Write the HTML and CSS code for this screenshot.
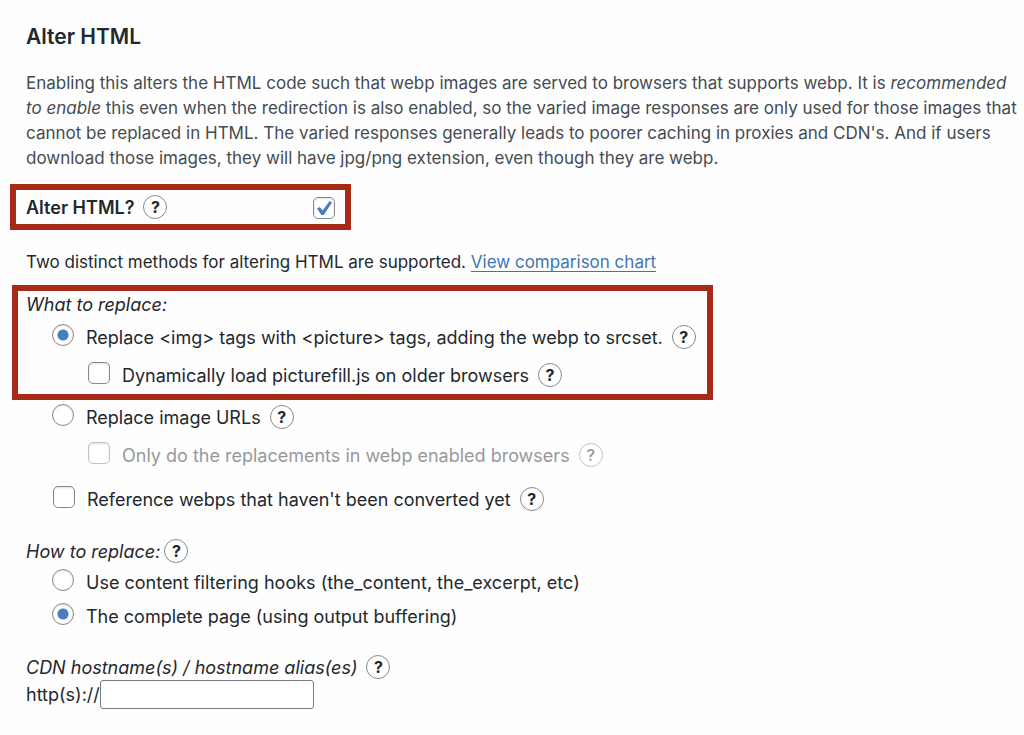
FILE: index.html
```html
<!DOCTYPE html>
<html lang="en">

<head>
    <meta charset="UTF-8">
    <meta name="viewport" content="width=device-width, initial-scale=1.0">
    <title>Alter HTML</title>
    <link rel="stylesheet" href="styles.css">
</head>

<body>
    <form class="settings">
        <h2>Alter HTML</h2>
        <p class="intro">
            Enabling this alters the HTML code such that webp images are served to browsers that supports webp. It is
            <i>recommended to enable</i> this even when the redirection is also enabled, so the varied image responses
            are only used for those images that cannot be replaced in HTML. The varied responses generally leads to
            poorer caching in proxies and CDN's. And if users download those images, they will have jpg/png extension,
            even though they are webp.
        </p>

        <div class="highlight highlight-toggle">
            <label class="toggle-label" for="alter-html">Alter HTML?</label>
            <button type="button" class="help" aria-label="Help: Alter HTML">?</button>
            <input type="checkbox" id="alter-html" checked>
        </div>

        <p class="methods">Two distinct methods for altering HTML are supported. <a href="#">View comparison chart</a></p>

        <div class="highlight highlight-replace">
            <div class="group-title">What to replace:</div>
            <div class="option">
                <input type="radio" id="replace-picture" name="what" checked>
                <label for="replace-picture">Replace &lt;img&gt; tags with &lt;picture&gt; tags, adding the webp to srcset.</label>
                <button type="button" class="help" aria-label="Help: picture tags">?</button>
            </div>
            <div class="option nested">
                <input type="checkbox" id="picturefill">
                <label for="picturefill">Dynamically load picturefill.js on older browsers</label>
                <button type="button" class="help" aria-label="Help: picturefill">?</button>
            </div>
        </div>

        <div class="option">
            <input type="radio" id="replace-urls" name="what">
            <label for="replace-urls">Replace image URLs</label>
            <button type="button" class="help" aria-label="Help: image URLs">?</button>
        </div>
        <div class="option nested disabled">
            <input type="checkbox" id="only-webp" disabled>
            <label for="only-webp">Only do the replacements in webp enabled browsers</label>
            <button type="button" class="help" aria-label="Help: webp enabled browsers" disabled>?</button>
        </div>
        <div class="option reference">
            <input type="checkbox" id="reference-webps">
            <label for="reference-webps">Reference webps that haven't been converted yet</label>
            <button type="button" class="help" aria-label="Help: reference webps">?</button>
        </div>

        <div class="group-title how">
            <span>How to replace:</span>
            <button type="button" class="help" aria-label="Help: how to replace">?</button>
        </div>
        <div class="option compact">
            <input type="radio" id="use-hooks" name="how">
            <label for="use-hooks">Use content filtering hooks (the_content, the_excerpt, etc)</label>
        </div>
        <div class="option compact">
            <input type="radio" id="complete-page" name="how" checked>
            <label for="complete-page">The complete page (using output buffering)</label>
        </div>

        <div class="group-title cdn">
            <label for="cdn">CDN hostname(s) / hostname alias(es)</label>
            <button type="button" class="help" aria-label="Help: CDN hostnames">?</button>
        </div>
        <div class="host">
            <label for="cdn">http(s)://</label>
            <input type="text" id="cdn">
        </div>
    </form>
</body>

</html>
```
FILE: styles.css
```css
* {
    box-sizing: border-box;
}

body {
    margin: 0;
    background-color: #fefefe;
    color: #23282d;
    font-family: Inter, "Liberation Sans", sans-serif;
    font-size: 17px;
    line-height: 25px;
}

.settings {
    padding: 22px 4px 20px 10px;
}

h2 {
    margin: 0 16px 19px;
    font-size: 21px;
    line-height: 30px;
    font-weight: 600;
}

p {
    margin: 0 0 0 16px;
}

.intro {
    color: #444b51;
}

a {
    color: #3f75b0;
    text-underline-offset: 3px;
}

.highlight {
    border: 6px solid #a62b17;
}

.highlight-toggle {
    display: flex;
    align-items: center;
    max-width: 341px;
    height: 46px;
    margin-top: 13px;
    padding: 0 10px;
}

.highlight-toggle input {
    margin: 2px 0 0 auto;
}

.toggle-label {
    font-size: 18px;
    font-weight: 600;
}

.methods {
    margin-top: 20px;
    margin-bottom: 10px;
}

.highlight-replace {
    max-width: 701px;
    margin: 0 0 -2px 2px;
}

.highlight-replace .group-title {
    height: 27px;
    margin-left: 8px;
}

.highlight-replace .option {
    margin-left: 34px;
}

.highlight-replace .nested {
    margin-left: 70px;
}

.group-title {
    display: flex;
    align-items: center;
    height: 28px;
    margin-left: 16px;
    font-size: 18px;
    font-style: italic;
}

.option {
    display: flex;
    align-items: center;
    height: 38px;
    margin-left: 42px;
    font-size: 18px;
}

.option input {
    margin: 0 12px 4px 0;
}

.nested {
    margin-left: 78px;
}

.compact {
    height: 34px;
}

.reference {
    margin-top: 6px;
    margin-left: 43px;
}

.how {
    margin-top: 19px;
}

.how .help {
    margin-left: 4px;
}

.cdn {
    height: 26px;
    margin-top: 21px;
}

input[type="checkbox"],
input[type="radio"] {
    flex: none;
    appearance: none;
    width: 22px;
    height: 22px;
    border: 1px solid #85888c;
    border-radius: 5px;
    background-color: #fff;
    box-shadow: inset 0 1px 2px rgba(0, 0, 0, 0.12);
}

input[type="radio"] {
    border-radius: 50%;
}

input[type="radio"]:checked {
    background-image: radial-gradient(circle, #457dbe 5px, transparent 6px);
}

input[type="checkbox"]:checked {
    background: #fff url("data:image/svg+xml,%3Csvg xmlns='http://www.w3.org/2000/svg' viewBox='0 0 20 20'%3E%3Cpath d='M3 10.6 5.8 9l2.8 3.5L15.6 3l2.4 1.5L9.7 17H7.4z' fill='%23457dbe'/%3E%3C/svg%3E") center / 20px 20px no-repeat;
}

.help {
    flex: none;
    width: 24px;
    height: 24px;
    margin: 0 0 0 9px;
    padding: 0;
    border: 1px solid #85888c;
    border-radius: 50%;
    background-color: #fff;
    color: #23282d;
    font-family: inherit;
    font-size: 16px;
    font-weight: 700;
    line-height: 22px;
    text-align: center;
    cursor: pointer;
}

.disabled label {
    color: #96999c;
}

.disabled input,
.disabled .help {
    border-color: #bfc1c3;
}

.disabled .help {
    color: #96999c;
    font-weight: 500;
}

.host {
    display: flex;
    align-items: center;
    margin-left: 16px;
    font-size: 18px;
}

.host input {
    width: 214px;
    height: 29px;
    padding: 0 8px;
    border: 1px solid #777a7e;
    border-radius: 3px;
    background-color: #fff;
    font: inherit;
}
```
